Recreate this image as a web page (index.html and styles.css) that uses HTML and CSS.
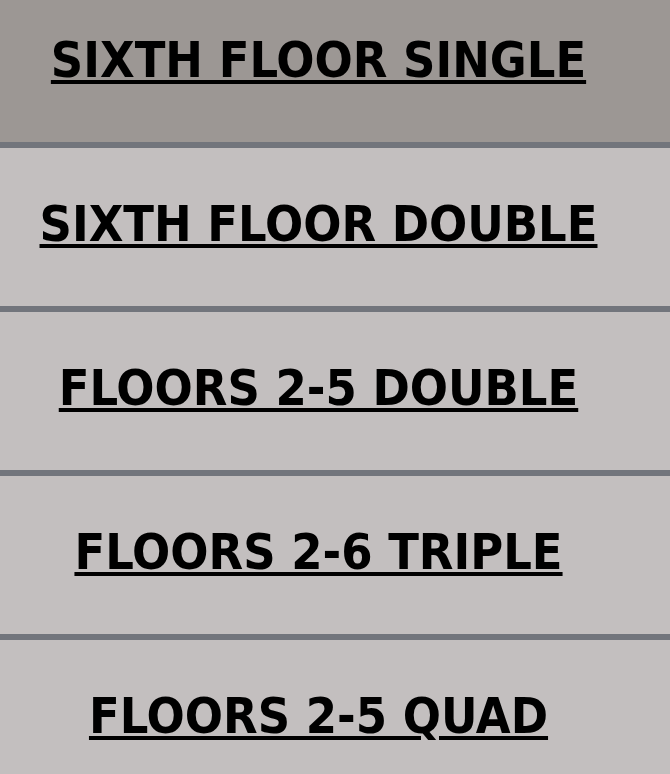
FILE: index.html
```html
<!DOCTYPE html>
<html>
<head>
<meta charset="utf-8">
<link rel="stylesheet" href="styles.css">
</head>
<body>
<ul class="menu">
  <li class="item active"><a href="#">Sixth Floor Single</a></li>
  <li class="item"><a href="#">Sixth Floor Double</a></li>
  <li class="item"><a href="#">Floors 2-5 Double</a></li>
  <li class="item"><a href="#">Floors 2-6 Triple</a></li>
  <li class="item"><a href="#">Floors 2-5 Quad</a></li>
</ul>
</body>
</html>
```
FILE: styles.css
```css
html, body {
  margin: 0;
  padding: 0;
  background: #c3bfbf;
  overflow: hidden;
}
.menu {
  list-style: none;
  margin: -16px 0 0 0;
  padding: 0;
  display: flex;
  flex-direction: column;
  gap: 6px;
  background: #72757c;
}
.item {
  box-sizing: border-box;
  height: 158px;
  background: #c3bfbf;
  display: flex;
  align-items: center;
  justify-content: center;
  padding-right: 33px;
  padding-bottom: 6px;
}
.item.active {
  background: #9c9794;
}
.item a {
  font-family: "DejaVu Sans", sans-serif;
  font-stretch: condensed;
  font-weight: bold;
  font-size: 50px;
  letter-spacing: 0;
  text-transform: uppercase;
  color: #000;
  text-decoration: underline;
  text-decoration-thickness: 4px;
  text-underline-offset: 3px;
  line-height: 1;
}
```
